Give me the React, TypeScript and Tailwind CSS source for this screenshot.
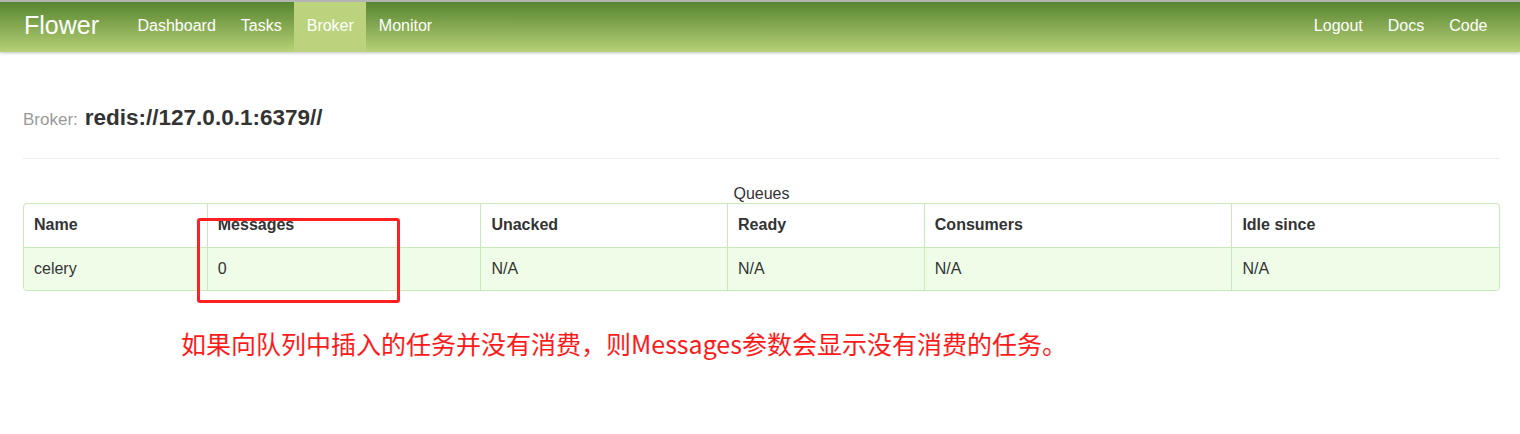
import React from 'react';

const columns = [
  { title: 'Name', width: 'w-[183px]' },
  { title: 'Messages', width: 'w-[274px]' },
  { title: 'Unacked', width: 'w-[247px]' },
  { title: 'Ready', width: 'w-[197px]' },
  { title: 'Consumers', width: 'w-[308px]' },
  { title: 'Idle since', width: 'w-[268px]' },
];

const row = ['celery', '0', 'N/A', 'N/A', 'N/A', 'N/A'];

function NavBar() {
  const left = ['Dashboard', 'Tasks', 'Broker', 'Monitor'];
  const right = ['Logout', 'Docs', 'Code'];
  return (
    <div className="border-t-2 border-[#b4b4b4] shadow-[0_1px_3px_rgba(0,0,0,0.25)]">
      <div className="h-[50px] flex items-stretch pl-[24px] pr-[20px] bg-gradient-to-b from-[#578530] to-[#b7d176] text-white">
        <div className="flex items-center pb-[3px] text-[25px] pr-[26px]">Flower</div>
        <nav className="flex items-stretch">
          {left.map((item) => (
            <a
              key={item}
              className={`flex items-center pb-[3px] px-[12.5px] text-[16px] ${item === 'Broker' ? 'bg-[#bad37c]' : ''}`}
            >
              {item}
            </a>
          ))}
        </nav>
        <nav className="ml-auto flex items-stretch">
          {right.map((item) => (
            <a key={item} className="flex items-center pb-[3px] px-[12.5px] text-[16px]">
              {item}
            </a>
          ))}
        </nav>
      </div>
    </div>
  );
}

export default function App() {
  return (
    <div className="min-h-[434px] bg-white text-[#333] font-['Liberation_Sans',Arial,sans-serif]">
      <NavBar />
      <div className="pl-[23px] pr-[20px]">
        <h2 className="mt-[55px] flex items-baseline gap-[7px] leading-none">
          <span className="text-[17px] text-[#999]">Broker:</span>
          <span className="text-[22.5px] font-bold text-[#333]">redis://127.0.0.1:6379//</span>
        </h2>
        <hr className="mt-[28px] border-t border-[#eeeeee]" />

        <div className="mt-[26px] text-center text-[16px] leading-[18px]">Queues</div>
        <div className="relative">
          <table className="border-separate border-spacing-0 w-full text-[16px] border border-[#c8e9b9] rounded-[4px]">
            <thead>
              <tr className="h-[43px]">
                {columns.map((c, i) => (
                  <th
                    key={c.title}
                    className={`${c.width} text-left font-bold px-[10px] ${i > 0 ? 'border-l border-[#c8e9b9]' : ''}`}
                  >
                    {c.title}
                  </th>
                ))}
              </tr>
            </thead>
            <tbody>
              <tr className="h-[43px] bg-[#effde8]">
                {row.map((v, i) => (
                  <td
                    key={i}
                    className={`px-[10px] border-t border-[#c8e9b9] ${i > 0 ? 'border-l' : ''} ${i === 0 ? 'rounded-bl-[4px]' : ''} ${i === row.length - 1 ? 'rounded-br-[4px]' : ''}`}
                  >
                    {v}
                  </td>
                ))}
              </tr>
            </tbody>
          </table>
          {/* annotation box */}
          <div className="absolute left-[174px] top-[15px] w-[203px] h-[85px] border-[3px] border-[#ff2121] rounded-[3px]" />
        </div>

        <p className="mt-[37px] pl-[158px] text-[25px] leading-[30px] text-[#ff1a1a] font-['Microsoft_YaHei','Noto_Sans_CJK_SC',sans-serif]">
          如果向队列中插入的任务并没有消费，则Messages参数会显示没有消费的任务。
        </p>
      </div>
    </div>
  );
}
